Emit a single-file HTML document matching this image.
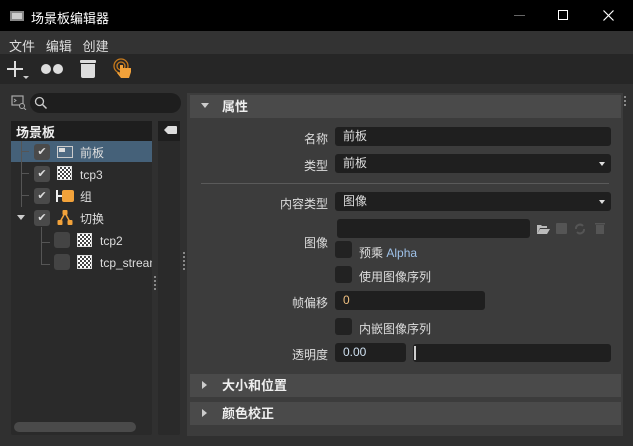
<!DOCTYPE html>
<html><head><meta charset="utf-8"><style>
*{margin:0;padding:0;box-sizing:border-box}
body{width:633px;height:446px;background:#303030;font-family:"Liberation Sans","Noto Sans CJK SC",sans-serif;font-size:12px;color:#ddd;position:relative;overflow:hidden}
.a{position:absolute}
.lbl{position:absolute;right:305px;text-align:right;color:#ddd;font-size:12px}
.in{position:absolute;background:#1f1f1f;border-radius:3px;color:#ddd;padding-left:8px;font-size:12px}
.cb{position:absolute;width:17px;height:17px;background:#222;border-radius:3px}
.hdr{position:absolute;left:190px;width:431px;height:23px;background:#4a4a4a;font-weight:bold;color:#eee;font-size:13px;line-height:24px;padding-left:32px}
.tri{position:absolute;left:11px;top:8px;width:0;height:0;border-left:4px solid transparent;border-right:4px solid transparent;border-top:5px solid #ccc}
.trir{position:absolute;left:12px;top:7px;width:0;height:0;border-top:4px solid transparent;border-bottom:4px solid transparent;border-left:5px solid #ccc}
.tck{position:absolute;width:16px;height:16px;background:#4a4a4a;border-radius:3px;color:#ddd;font-size:11px;text-align:center;line-height:16px}
.row{position:absolute;left:80px;font-size:12px;line-height:16px;top:1px}
.chk{position:absolute;width:15px;height:14px;background:#fff;background-image:linear-gradient(45deg,#444 25%,transparent 25%,transparent 75%,#444 75%),linear-gradient(45deg,#444 25%,transparent 25%,transparent 75%,#444 75%);background-size:4px 4px;background-position:0 0,2px 2px;border:1px solid #ddd}
</style></head><body>
<div class="a" style="left:0;top:0;width:633px;height:31px;background:#000"></div>
<div class="a" style="left:10px;top:11px;width:14px;height:10px;border:2px solid #888;background:#ccc"></div>
<div class="a" style="left:31px;top:8px;color:#fff;font-size:13px">场景板编辑器</div>
<div class="a" style="left:514px;top:15px;width:11px;height:1px;background:#666"></div>
<div class="a" style="left:558px;top:10px;width:10px;height:10px;border:1px solid #fff"></div>
<svg class="a" style="left:603px;top:10px" width="11" height="11" viewBox="0 0 11 11"><path d="M0.5 0.5L10.5 10.5M10.5 0.5L0.5 10.5" stroke="#fff" stroke-width="1.2"/></svg>
<div class="a" style="left:0;top:31px;width:633px;height:23px;background:#333"></div>
<div class="a" style="left:9px;top:36px;font-size:13px;color:#ddd">文件&nbsp;&nbsp;&nbsp;编辑&nbsp;&nbsp;&nbsp;创建</div>
<div class="a" style="left:0;top:54px;width:633px;height:30px;background:#262626"></div>
<div class="a" style="left:7px;top:68px;width:16px;height:2px;background:#ddd"></div>
<div class="a" style="left:14px;top:61px;width:2px;height:16px;background:#ddd"></div>
<div class="a" style="left:23px;top:76px;border-left:3px solid transparent;border-right:3px solid transparent;border-top:3px solid #ccc"></div>
<div class="a" style="left:41px;top:64px;width:10px;height:10px;border-radius:50%;background:#ddd"></div>
<div class="a" style="left:53px;top:64px;width:10px;height:10px;border-radius:50%;background:#ddd"></div>
<div class="a" style="left:80px;top:60px;width:16px;height:3px;background:#ddd;border-radius:1px"></div>
<div class="a" style="left:81px;top:64px;width:14px;height:14px;background:#ddd;border-radius:0 0 2px 2px"></div>
<svg class="a" style="left:112px;top:57px" width="24" height="24" viewBox="0 0 24 24"><circle cx="9" cy="9" r="7" fill="none" stroke="#c77a1c" stroke-width="1.3"/><circle cx="9" cy="9" r="4" fill="none" stroke="#c77a1c" stroke-width="1.3"/><path d="M8 8 v9 l-2-2 -1 1 4 5 h8 l2-6 v-4 h-8 v-3z" fill="#f2a23a"/></svg>
<svg class="a" style="left:11px;top:95px" width="16" height="15" viewBox="0 0 16 15"><rect x="1" y="1" width="11" height="9" fill="none" stroke="#aaa" stroke-width="1.2"/><path d="M3 4 l2 1.5 -2 1.5" stroke="#aaa" fill="none"/><circle cx="11" cy="11" r="2.5" fill="#303030" stroke="#aaa"/><path d="M13 13 l2 2" stroke="#aaa"/></svg>
<div class="a" style="left:30px;top:93px;width:151px;height:20px;background:#1e1e1e;border-radius:10px"></div>
<svg class="a" style="left:34px;top:96px" width="14" height="14" viewBox="0 0 14 14"><circle cx="5.5" cy="5.5" r="4" fill="none" stroke="#ccc" stroke-width="1.3"/><path d="M8.5 8.5 l4 4" stroke="#ccc" stroke-width="1.5"/></svg>
<div class="a" style="left:11px;top:121px;width:141px;height:314px;background:#2a2a2a;border-radius:2px"></div>
<div class="a" style="left:11px;top:121px;width:141px;height:20px;background:#1e1e1e"></div>
<div class="a" style="left:16px;top:122px;font-weight:bold;font-size:13px;color:#eee">场景板</div>
<div class="a" style="left:11px;top:141px;width:141px;height:21px;background:#456179"></div>
<div class="a" style="left:21px;top:141px;width:1px;height:66px;background:#555"></div>
<div class="a" style="left:21px;top:151px;width:8px;height:1px;background:#555"></div>
<div class="a" style="left:21px;top:173px;width:8px;height:1px;background:#555"></div>
<div class="a" style="left:21px;top:195px;width:8px;height:1px;background:#555"></div>
<div class="a" style="left:41px;top:227px;width:1px;height:37px;background:#555"></div>
<div class="a" style="left:41px;top:242px;width:9px;height:1px;background:#555"></div>
<div class="a" style="left:41px;top:264px;width:9px;height:1px;background:#555"></div>
<div class="tck" style="left:34px;top:144px">✔</div>
<div class="tck" style="left:34px;top:166px">✔</div>
<div class="tck" style="left:34px;top:188px">✔</div>
<div class="tck" style="left:34px;top:210px">✔</div>
<div class="a" style="left:17px;top:215px;border-left:4px solid transparent;border-right:4px solid transparent;border-top:5px solid #ccc"></div>
<div class="tck" style="left:54px;top:232px;background:#444"></div>
<div class="tck" style="left:54px;top:254px;background:#444"></div>
<div class="a" style="left:57px;top:146px;width:16px;height:12px;border:1px solid #ccc;background:#4f6a82"></div>
<div class="a" style="left:59px;top:148px;width:6px;height:4px;background:#ddd"></div>
<div class="chk" style="left:57px;top:166px"></div>
<div class="a" style="left:56px;top:190px;width:2px;height:12px;background:#eee"></div>
<div class="a" style="left:56px;top:195px;width:6px;height:2px;background:#eee"></div>
<div class="a" style="left:62px;top:190px;width:12px;height:12px;background:#f2a23a;border-radius:2px"></div>
<svg class="a" style="left:56px;top:209px" width="18" height="18" viewBox="0 0 18 18"><path d="M9 4 L4 13 M9 4 L14 13" stroke="#f2a23a" stroke-width="1.5"/><rect x="6.5" y="1" width="5" height="5" rx="1" fill="#f2a23a"/><rect x="1.5" y="11" width="5" height="5" rx="1" fill="#f2a23a"/><rect x="11.5" y="11" width="5" height="5" rx="1" fill="#f2a23a"/></svg>
<div class="chk" style="left:77px;top:233px"></div>
<div class="chk" style="left:77px;top:255px"></div>
<div class="row" style="top:145px">前板</div>
<div class="row" style="top:167px">tcp3</div>
<div class="row" style="top:189px">组</div>
<div class="row" style="top:211px">切换</div>
<div class="row" style="left:100px;top:233px">tcp2</div>
<div class="row" style="left:100px;top:255px;width:52px;overflow:hidden;white-space:nowrap">tcp_stream</div>
<div class="a" style="left:14px;top:422px;width:122px;height:10px;background:#4a4a4a;border-radius:5px"></div>
<div class="a" style="left:158px;top:121px;width:22px;height:314px;background:#2a2a2a;border-radius:2px"></div>
<div class="a" style="left:158px;top:121px;width:22px;height:20px;background:#1e1e1e"></div>
<div class="a" style="left:164px;top:126px;width:13px;height:8px;background:#ddd;border-radius:1px;clip-path:polygon(30% 0,100% 0,100% 100%,30% 100%,0 50%)"></div>
<div class="a" style="left:154px;top:276px;width:2px;height:14px;background:repeating-linear-gradient(#888 0 2px,transparent 2px 4px)"></div>
<div class="a" style="left:183px;top:252px;width:2px;height:20px;background:repeating-linear-gradient(#888 0 2px,transparent 2px 4px)"></div>
<div class="a" style="left:187px;top:93px;width:436px;height:343px;background:#3c3c3c"></div>
<div class="hdr" style="top:95px"><span class="tri"></span>属性</div>
<div class="lbl" style="top:130px">名称</div>
<div class="in" style="left:335px;top:127px;width:276px;height:19px;line-height:19px">前板</div>
<div class="lbl" style="top:157px">类型</div>
<div class="in" style="left:335px;top:154px;width:276px;height:19px;line-height:19px">前板<span class="a" style="right:6px;top:8px;border-left:3px solid transparent;border-right:3px solid transparent;border-top:4px solid #ddd"></span></div>
<div class="a" style="left:201px;top:183px;width:408px;height:1px;background:#5a5a5a"></div>
<div class="lbl" style="top:195px">内容类型</div>
<div class="in" style="left:335px;top:192px;width:276px;height:19px;line-height:19px">图像<span class="a" style="right:6px;top:8px;border-left:3px solid transparent;border-right:3px solid transparent;border-top:4px solid #ddd"></span></div>
<div class="lbl" style="top:234px">图像</div>
<div class="in" style="left:337px;top:219px;width:193px;height:19px"></div>
<svg class="a" style="left:536px;top:222px" width="70" height="14" viewBox="0 0 70 14"><path d="M1 3h4l1 1h5v2H4L1 12z M4 7h10l-3 5H1z" fill="#bbb"/><rect x="20" y="1" width="11" height="11" rx="1" fill="#555"/><path d="M40 7a4 4 0 0 1 7-3M48 7a4 4 0 0 1-7 3" stroke="#555" stroke-width="2" fill="none"/><rect x="60" y="3" width="8" height="9" fill="#555"/><rect x="59" y="1" width="10" height="1.5" fill="#555"/></svg>
<div class="cb" style="left:335px;top:241px"></div>
<div class="a" style="left:359px;top:244px">预乘 <span style="color:#9ec1e8">Alpha</span></div>
<div class="cb" style="left:335px;top:266px"></div>
<div class="a" style="left:359px;top:268px">使用图像序列</div>
<div class="lbl" style="top:294px">帧偏移</div>
<div class="in" style="left:335px;top:291px;width:150px;height:19px;line-height:19px;color:#f0c080">0</div>
<div class="cb" style="left:335px;top:318px"></div>
<div class="a" style="left:359px;top:320px">内嵌图像序列</div>
<div class="lbl" style="top:346px">透明度</div>
<div class="in" style="left:335px;top:343px;width:71px;height:19px;line-height:19px;color:#cfe0f0">0.00</div>
<div class="in" style="left:413px;top:344px;width:198px;height:18px"></div>
<div class="a" style="left:414px;top:346px;width:2px;height:14px;background:#ccc"></div>
<div class="hdr" style="top:374px"><span class="trir"></span>大小和位置</div>
<div class="hdr" style="top:402px"><span class="trir"></span>颜色校正</div>
<div class="a" style="left:624px;top:96px;width:2px;height:10px;background:repeating-linear-gradient(#888 0 2px,transparent 2px 4px)"></div>
</body></html>
